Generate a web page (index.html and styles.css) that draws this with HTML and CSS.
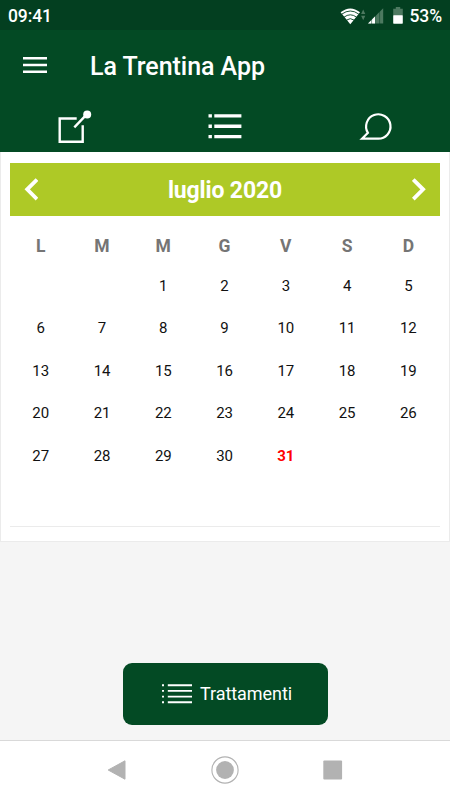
FILE: index.html
```html
<!DOCTYPE html>
<html lang="it">
<head>
    <meta charset="UTF-8">
    <meta name="viewport" content="width=device-width, initial-scale=1.0">
    <link rel="stylesheet" href="styles.css">
    <title>La Trentina App</title>
</head>
<body>
    <div class="status-bar">
        <span class="clock">09:41</span>
        <div class="status-icons">
            <svg class="wifi" width="26" height="18" viewBox="0 0 26 18">
                <path d="M0.6 5.2Q10.3 -2.4 20 5.2L10.3 17.2Z" fill="#fff"/>
                <path d="M1.8 7.1Q10.3 0.9 18.8 7.1M4 10.2Q10.3 5.4 16.6 10.2M6.5 13.1Q10.3 10.2 14.1 13.1" fill="none" stroke="#033f20" stroke-width="0.9"/>
                <path d="M21.1 7L23.2 2.6L25.3 7ZM21.1 8.8L23.2 13.2L25.3 8.8Z" fill="#4d7960"/>
            </svg>
            <svg class="signal" width="16" height="16" viewBox="0 0 16 16">
                <path d="M0 15.5L15.2 0.3V15.5Z" fill="#4d7960"/>
                <path d="M0 15.5L7.2 8.3V15.5Z" fill="#fff"/>
                <path d="M3.6 11V16M7.6 5V16M11.6 2V16" stroke="#033f20" stroke-width="0.5"/>
            </svg>
            <svg class="battery" width="10" height="17" viewBox="0 0 10 17">
                <path d="M2.8 0H7.2V1.8H9.8V9H0.2V1.8H2.8Z" fill="#4d7960"/>
                <rect x="0.2" y="8.3" width="9.6" height="8.4" rx="0.6" fill="#fff"/>
            </svg>
            <span class="percent">53%</span>
        </div>
    </div>

    <header class="app-bar">
        <svg width="24" height="18" viewBox="0 0 24 18">
            <path d="M0 1.2H24M0 8H24M0 14.8H24" stroke="#fff" stroke-width="2.5"/>
        </svg>
        <h1>La Trentina App</h1>
    </header>

    <nav class="tabs">
        <a class="tab">
            <svg width="40" height="40" viewBox="0 0 40 40">
                <path d="M21.7 12.5H4.7V35.7H27.7V19.2" fill="none" stroke="#fff" stroke-width="2.4"/>
                <path d="M19.3 21.3L31 9.2" stroke="#fff" stroke-width="2.4"/>
                <circle cx="32.2" cy="8.4" r="4" fill="#fff"/>
            </svg>
        </a>
        <a class="tab">
            <svg width="40" height="40" viewBox="0 0 40 40">
                <path d="M3.5 9.9H6.9M9.3 9.9H36.4M3.5 20.2H6.9M9.3 20.2H36.4M3.5 30.6H6.9M9.3 30.6H36.4" stroke="#fff" stroke-width="3.4"/>
            </svg>
        </a>
        <a class="tab">
            <svg width="40" height="40" viewBox="0 0 40 40">
                <path d="M7 32.7L12.9 26.9A12.2 12.2 0 1 1 22.7 32.7Z" fill="none" stroke="#fff" stroke-width="2.2"/>
            </svg>
        </a>
    </nav>

    <main class="content">
        <div class="calendar">
            <div class="month">
                <svg width="14" height="23" viewBox="0 0 14 23">
                    <path d="M13 1.5L3.2 11.3L13 21.1" fill="none" stroke="#fff" stroke-width="3.8"/>
                </svg>
                <h2>luglio 2020</h2>
                <svg width="14" height="23" viewBox="0 0 14 23">
                    <path d="M1.3 1.5L11.1 11.3L1.3 21.1" fill="none" stroke="#fff" stroke-width="3.8"/>
                </svg>
            </div>
            <div class="weekdays">
                <span>L</span><span>M</span><span>M</span><span>G</span><span>V</span><span>S</span><span>D</span>
            </div>
            <div class="days">
                <span></span><span></span><span>1</span><span>2</span><span>3</span><span>4</span><span>5</span>
                <span>6</span><span>7</span><span>8</span><span>9</span><span>10</span><span>11</span><span>12</span>
                <span>13</span><span>14</span><span>15</span><span>16</span><span>17</span><span>18</span><span>19</span>
                <span>20</span><span>21</span><span>22</span><span>23</span><span>24</span><span>25</span><span>26</span>
                <span>27</span><span>28</span><span>29</span><span>30</span><span class="today">31</span><span></span><span></span>
            </div>
        </div>

        <button class="btn-trattamenti">
            <svg width="30" height="20" viewBox="0 0 30 20">
                <path d="M0 1.2H2M5.8 1.2H30M0 6.9H2M5.8 6.9H30M0 12.6H2M5.8 12.6H30M0 18.3H2M5.8 18.3H30" stroke="#fff" stroke-width="1.9"/>
            </svg>
            <span>Trattamenti</span>
        </button>
    </main>

    <!-- Android navigation -->
    <div class="nav-bar">
        <svg width="20" height="28" viewBox="0 0 20 28">
            <path d="M18 4.8L1.2 14L18 23.2Z" fill="#b2b2b2" stroke="#b2b2b2" stroke-linejoin="round"/>
        </svg>
        <svg width="28" height="28" viewBox="0 0 28 28">
            <circle cx="14" cy="14" r="13.1" fill="none" stroke="#b2b2b2" stroke-width="1.1"/>
            <circle cx="14" cy="14" r="8.9" fill="#b2b2b2"/>
        </svg>
        <svg width="20" height="28" viewBox="0 0 20 28">
            <rect x="0.3" y="4.5" width="18.8" height="19" rx="1" fill="#b2b2b2"/>
        </svg>
    </div>
</body>
</html>
```
FILE: styles.css
```css
* {
    box-sizing: border-box;
}
body {
    margin: 0;
    height: 800px;
    display: flex;
    flex-direction: column;
    background-color: #f5f5f5;
    font-family: Roboto, sans-serif;
    color: #111;
    overflow: hidden;
}
svg {
    display: block;
    flex-shrink: 0;
}
h1, h2 {
    margin: 0;
}

/* status bar */
.status-bar {
    height: 30px;
    padding: 1px 8px 0;
    display: flex;
    align-items: center;
    justify-content: space-between;
    background-color: #033f20;
    color: #fff;
    font-size: 17.5px;
    font-weight: 500;
    letter-spacing: -0.1px;
}
.status-icons {
    display: flex;
    align-items: center;
}
.signal {
    margin-left: 2px;
}
.battery {
    margin: 0 6.5px 0 9px;
}

/* header */
.app-bar {
    height: 71px;
    padding: 0 23px;
    display: flex;
    align-items: center;
    gap: 43px;
    background-color: #034a24;
    color: #fff;
}
.app-bar h1 {
    padding-top: 2px;
    font-size: 25px;
    font-weight: 500;
    letter-spacing: -0.05px;
}
.tabs {
    height: 51px;
    padding-top: 5px;
    display: grid;
    grid-template-columns: repeat(3, 1fr);
    justify-items: center;
    align-items: start;
    background-color: #034a24;
}

/* calendar */
.content {
    flex: 1;
    display: flex;
    flex-direction: column;
    align-items: center;
}
.calendar {
    width: 100%;
    height: 390px;
    padding: 11px 9px 14px;
    display: flex;
    flex-direction: column;
    background-color: #fff;
    border: 1px solid #ebebeb;
    border-top: 0;
}
.month {
    height: 53px;
    padding: 0 14px;
    display: flex;
    align-items: center;
    justify-content: space-between;
    background-color: #aec926;
    color: #fff;
}
.month h2 {
    padding-top: 2px;
    font-size: 23px;
    font-weight: 700;
    letter-spacing: -0.15px;
}
.weekdays, .days {
    padding-right: 1px;
    display: grid;
    grid-template-columns: repeat(7, 1fr);
    align-items: center;
    text-align: center;
}
.weekdays {
    height: 48.5px;
    padding-top: 10.5px;
    color: #757575;
    font-size: 17.5px;
    font-weight: 700;
}
.days {
    flex: 1;
    grid-auto-rows: 42.5px;
    align-content: start;
    font-size: 15px;
    letter-spacing: -0.15px;
    border-bottom: 1px solid #ebebeb;
}
.today {
    color: #f00;
    font-weight: 700;
}

.btn-trattamenti {
    width: 205px;
    height: 62px;
    margin-top: 121px;
    padding: 0 0 0 4px;
    display: flex;
    align-items: center;
    justify-content: center;
    gap: 8px;
    border: 0;
    border-radius: 9px;
    background-color: #034a24;
    color: #fff;
    font-family: inherit;
    font-size: 18px;
    letter-spacing: -0.05px;
}
.btn-trattamenti span {
    padding-bottom: 1px;
}

.nav-bar {
    height: 60px;
    padding-bottom: 2px;
    display: flex;
    align-items: center;
    justify-content: center;
    gap: 84px;
    background-color: #fff;
    border-top: 1px solid #d9d9d9;
}
```
